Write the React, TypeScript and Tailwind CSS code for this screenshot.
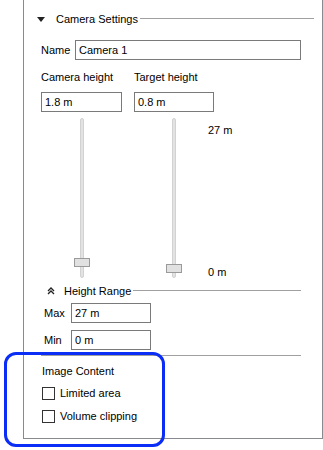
import React from "react";

const font = { fontFamily: '"Liberation Sans", Arial, sans-serif' };

const TextBox: React.FC<{ value: string; className?: string }> = ({ value, className }) => (
  <div
    className={`h-[20px] border border-[#7a7a7a] bg-white pl-[3px] flex items-center text-[11px] text-black ${className ?? ""}`}
  >
    {value}
  </div>
);

const Slider: React.FC<{ handleTop: number }> = ({ handleTop }) => (
  <div className="relative w-[16px] h-[160px]">
    <div className="absolute left-[6px] top-0 w-[4px] h-[160px] rounded-full bg-[#e3e3e3] border border-[#d2d2d2]" />
    <div
      className="absolute left-0 w-[16px] h-[9px] bg-[#e1e1e1] border border-[#9a9a9a]"
      style={{ top: handleTop }}
    />
  </div>
);

const CheckRow: React.FC<{ label: string }> = ({ label }) => (
  <div className="flex items-center h-[13px]">
    <div className="w-[13px] h-[13px] border border-[#333] bg-white" />
    <span className="ml-[5px] text-[11px] text-black">{label}</span>
  </div>
);

export default function App() {
  return (
    <div className="relative w-[323px] h-[450px] bg-white overflow-hidden text-black" style={font}>
      <div className="ml-[23px] w-[300px] h-[439px] border-l border-r border-b border-[#878b90] flex flex-col">
        {/* Camera Settings header */}
        <div className="mt-[11px] h-[16px] flex items-center ml-[13px] mr-[8px]">
          <svg width="8" height="5" viewBox="0 0 8 5">
            <path d="M0 0 L8 0 L4 5 Z" fill="#222" />
          </svg>
          <span className="ml-[11px] text-[11px]">Camera Settings</span>
          <div className="flex-1 h-px bg-[#a0a0a0] ml-[2px] -mt-[1px]" />
        </div>

        {/* Name */}
        <div className="mt-[13px] h-[20px] flex items-center ml-[17px] mr-[21px]">
          <span className="text-[11px] w-[34px]">Name</span>
          <TextBox value="Camera 1" className="flex-1" />
        </div>

        {/* Height labels */}
        <div className="mt-[9px] h-[16px] flex items-center ml-[17px] text-[11px]">
          <span className="w-[93px]">Camera height</span>
          <span>Target height</span>
        </div>

        <div className="mt-[7px] flex ml-[17px]">
          <TextBox value="1.8 m" className="w-[81px]" />
          <TextBox value="0.8 m" className="w-[80px] ml-[12px]" />
        </div>

        {/* Sliders */}
        <div className="mt-[6px] flex ml-[50px]">
          <Slider handleTop={140} />
          <div className="ml-[76px]">
            <Slider handleTop={146} />
          </div>
          <div className="ml-[26px] h-[160px] flex flex-col justify-between text-[11px] pt-[4px]">
            <span>27 m</span>
            <span className="mb-[-2px]">0 m</span>
          </div>
        </div>

        {/* Height Range header */}
        <div className="mt-[6px] h-[14px] flex items-center ml-[23px] mr-[21px]">
          <svg width="8" height="8" viewBox="0 0 8 8">
            <path d="M1 4 L4 1 L7 4 M1 7 L4 4 L7 7" fill="none" stroke="#222" strokeWidth="1.3" />
          </svg>
          <span className="ml-[9px] text-[11px]">Height Range</span>
          <div className="flex-1 h-px bg-[#a0a0a0] ml-[2px] -mt-[2px]" />
        </div>

        {/* Max / Min */}
        <div className="mt-[5px] flex items-center ml-[20px]">
          <span className="w-[27px] text-[11px]">Max</span>
          <TextBox value="27 m" className="w-[80px]" />
        </div>
        <div className="mt-[7px] flex items-center ml-[20px]">
          <span className="w-[27px] text-[11px]">Min</span>
          <TextBox value="0 m" className="w-[80px]" />
        </div>

        <div className="mt-[5px] ml-[17px] mr-[21px] h-px bg-[#a0a0a0]" />

        {/* Image Content */}
        <div className="mt-[8px] ml-[18px] text-[11px] h-[14px] flex items-center">Image Content</div>
        <div className="mt-[9px] ml-[18px]">
          <CheckRow label="Limited area" />
        </div>
        <div className="mt-[10px] ml-[18px]">
          <CheckRow label="Volume clipping" />
        </div>
      </div>

      {/* highlight annotation */}
      <div className="absolute left-[4px] top-[352px] w-[161px] h-[95px] rounded-[12px] border-[3px] border-[#0a2ef5]" />
    </div>
  );
}
